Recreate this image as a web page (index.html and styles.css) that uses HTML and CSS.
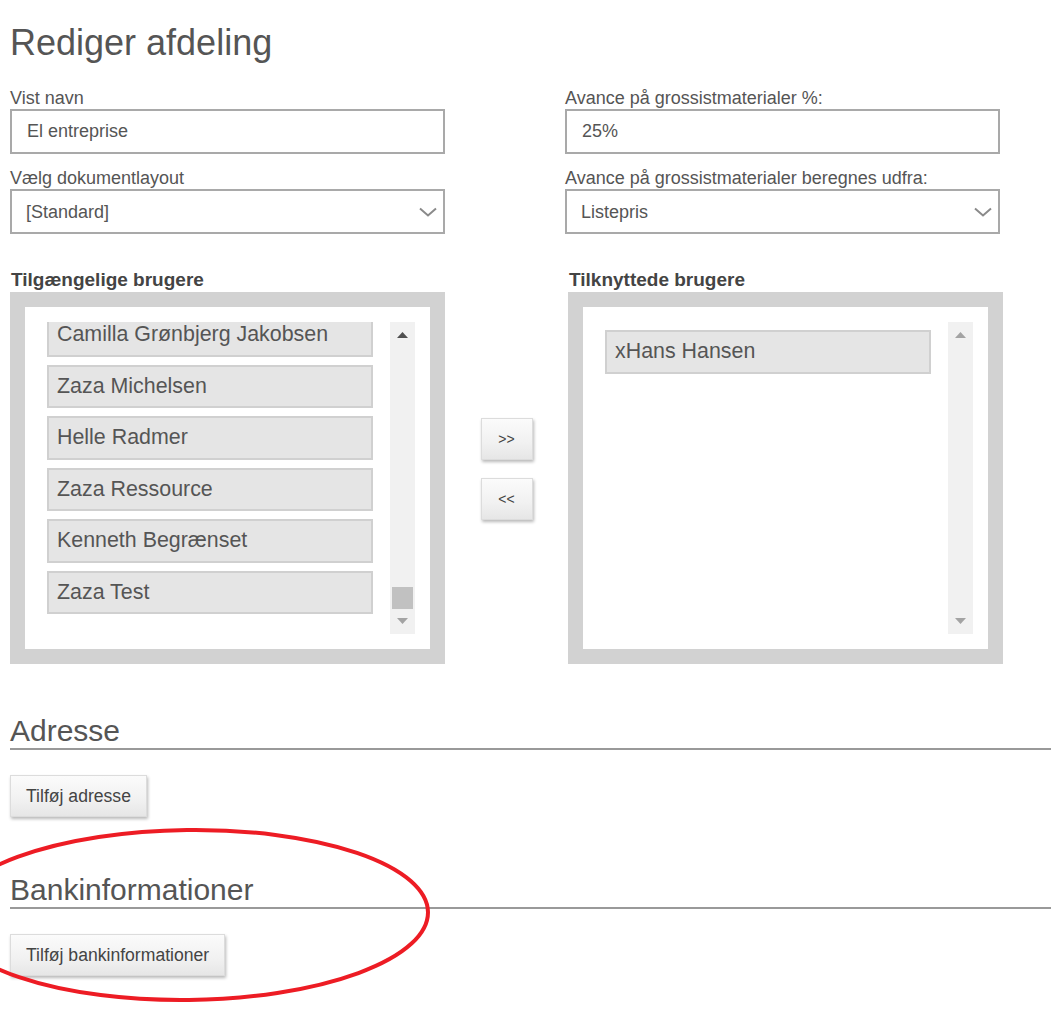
FILE: index.html
```html
<!DOCTYPE html>
<html lang="da">
<head>
<meta charset="utf-8">
<title>Rediger afdeling</title>
<link rel="stylesheet" href="styles.css">
</head>
<body>
<div class="page">
  <h1 class="title">Rediger afdeling</h1>

  <div class="form-grid">
    <div class="col">
      <div class="field">
        <label class="label">Vist navn</label>
        <input class="control" type="text" value="El entreprise">
      </div>
      <div class="field">
        <label class="label">Vælg dokumentlayout</label>
        <div class="select-wrap">
          <select class="control select"><option>[Standard]</option></select>
          <svg class="chevron" width="18" height="10" viewBox="0 0 18 10"><path d="M1 1.5 L9 8.5 L17 1.5" fill="none" stroke="#8a8a8a" stroke-width="2"/></svg>
        </div>
      </div>
    </div>
    <div class="col">
      <div class="field">
        <label class="label">Avance på grossistmaterialer %:</label>
        <input class="control" type="text" value="25%">
      </div>
      <div class="field">
        <label class="label">Avance på grossistmaterialer beregnes udfra:</label>
        <div class="select-wrap">
          <select class="control select"><option>Listepris</option></select>
          <svg class="chevron" width="18" height="10" viewBox="0 0 18 10"><path d="M1 1.5 L9 8.5 L17 1.5" fill="none" stroke="#8a8a8a" stroke-width="2"/></svg>
        </div>
      </div>
    </div>
  </div>

  <div class="users">
    <div class="user-col">
      <div class="list-title">Tilgængelige brugere</div>
      <div class="listbox">
        <div class="list-viewport">
          <div class="list-items scrolled">
            <div class="item">Camilla Grønbjerg Jakobsen</div>
            <div class="item">Zaza Michelsen</div>
            <div class="item">Helle Radmer</div>
            <div class="item">Zaza Ressource</div>
            <div class="item">Kenneth Begrænset</div>
            <div class="item">Zaza Test</div>
          </div>
        </div>
        <div class="scrollbar">
          <svg class="arrow" width="11" height="6" viewBox="0 0 11 6"><path d="M0 6 L5.5 0 L11 6 Z" fill="#505050"/></svg>
          <div class="spacer"></div>
          <div class="thumb"></div>
          <svg class="arrow" width="11" height="6" viewBox="0 0 11 6"><path d="M0 0 L11 0 L5.5 6 Z" fill="#a3a3a3"/></svg>
        </div>
      </div>
    </div>

    <div class="mover">
      <button class="btn mv">&gt;&gt;</button>
      <button class="btn mv">&lt;&lt;</button>
    </div>

    <div class="user-col">
      <div class="list-title">Tilknyttede brugere</div>
      <div class="listbox">
        <div class="list-viewport">
          <div class="list-items">
            <div class="item">xHans Hansen</div>
          </div>
        </div>
        <div class="scrollbar">
          <svg class="arrow" width="11" height="6" viewBox="0 0 11 6"><path d="M0 6 L5.5 0 L11 6 Z" fill="#a3a3a3"/></svg>
          <div class="spacer"></div>
          <svg class="arrow" width="11" height="6" viewBox="0 0 11 6"><path d="M0 0 L11 0 L5.5 6 Z" fill="#a3a3a3"/></svg>
        </div>
      </div>
    </div>
  </div>

  <section class="section">
    <h2 class="section-title">Adresse</h2>
    <button class="btn action">Tilføj adresse</button>
  </section>

  <section class="section">
    <h2 class="section-title">Bankinformationer</h2>
    <button class="btn action">Tilføj bankinformationer</button>
  </section>
</div>

<svg class="annotation" width="1051" height="1012" viewBox="0 0 1051 1012">
  <ellipse cx="188" cy="915" rx="240" ry="85" fill="none" stroke="#ed1c24" stroke-width="4" transform="rotate(-0.7 188 915)"/>
</svg>
</body>
</html>
```

FILE: styles.css
```css
html, body {
  margin: 0;
  background: #ffffff;
}

body {
  font-family: "Liberation Sans", Arial, sans-serif;
  color: #555555;
  position: relative;
  min-height: 1012px;
  overflow: hidden;
}

.page {
  padding: 22px 0 0 10px;
}

.title {
  margin: 0;
  font-size: 36px;
  line-height: 42px;
  font-weight: normal;
  color: #555555;
}

.form-grid {
  display: grid;
  grid-template-columns: 435px 435px;
  column-gap: 120px;
  margin-top: 23px;
}

.col {
  display: flex;
  flex-direction: column;
  gap: 13px;
}

.label {
  display: block;
  font-size: 18px;
  line-height: 22px;
  color: #555555;
}

.control {
  display: block;
  box-sizing: border-box;
  width: 435px;
  height: 45px;
  margin: 0;
  border: 2px solid #a9a9a9;
  border-radius: 0;
  padding: 0 15px;
  background: #ffffff;
  font-family: "Liberation Sans", Arial, sans-serif;
  font-size: 18px;
  color: #555555;
  outline: none;
}

.select {
  -webkit-appearance: none;
  appearance: none;
  padding-left: 14px;
}

.select-wrap {
  position: relative;
  width: 435px;
}

.chevron {
  position: absolute;
  right: 8px;
  top: 18px;
  pointer-events: none;
}

.users {
  display: grid;
  grid-template-columns: 435px 123px 435px;
  margin-top: 35px;
}

.list-title {
  font-size: 19px;
  line-height: 22px;
  font-weight: bold;
  color: #444444;
  padding-left: 1px;
  margin-bottom: 1px;
}

.listbox {
  box-sizing: border-box;
  height: 372px;
  border: 15px solid #d2d2d2;
  background: #ffffff;
  padding: 15px;
  display: flex;
}

.list-viewport {
  flex: 1;
  overflow: hidden;
}

.list-items.scrolled {
  margin-top: -17px;
}

.item {
  box-sizing: border-box;
  width: 326px;
  height: 43.5px;
  margin: 8px 0 0 7px;
  border: 2px solid #d0d0d0;
  background: #e5e5e5;
  padding-left: 8px;
  font-size: 21.4px;
  line-height: 39.5px;
  color: #555555;
  white-space: nowrap;
  overflow: hidden;
}

.scrollbar {
  width: 25px;
  background: #f1f1f1;
  display: flex;
  flex-direction: column;
  align-items: center;
  padding: 10px 0;
  box-sizing: border-box;
}

.arrow {
  display: block;
  flex: none;
}

.spacer {
  flex: 1;
}

.thumb {
  width: 21px;
  height: 22px;
  background: #c1c1c1;
  margin-bottom: 9px;
}

.mover {
  display: flex;
  flex-direction: column;
  align-items: center;
  gap: 18px;
  padding-top: 149px;
}

.btn {
  box-sizing: border-box;
  margin: 0;
  border: 1px solid #dcdcdc;
  border-radius: 0;
  background: linear-gradient(to bottom, #fbfbfb 0%, #f1f1f1 60%, #e6e6e6 100%);
  box-shadow: 1px 2px 3px rgba(0, 0, 0, 0.28);
  font-family: "Liberation Sans", Arial, sans-serif;
  color: #444444;
  cursor: pointer;
}

.mv {
  width: 52px;
  height: 42px;
  font-size: 14px;
  padding: 0;
}

.section {
  margin-top: 52px;
}

.section + .section {
  margin-top: 58px;
}

.section-title {
  margin: 0;
  font-size: 30px;
  line-height: 30px;
  font-weight: normal;
  color: #555555;
  padding-bottom: 2px;
  border-bottom: 2px solid #999999;
}

.action {
  display: block;
  margin-top: 25px;
  height: 42px;
  padding: 0 15px;
  font-size: 17.6px;
  line-height: 40px;
}

.annotation {
  position: absolute;
  left: 0;
  top: 0;
  pointer-events: none;
}
```
